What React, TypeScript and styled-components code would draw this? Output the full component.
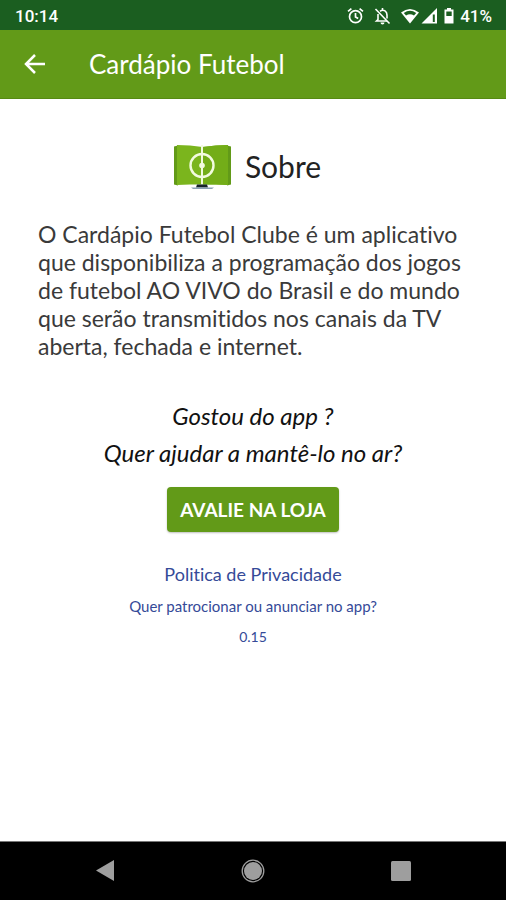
import React from "react";
import styled, { createGlobalStyle } from "styled-components";

const GlobalStyle = createGlobalStyle`
  *, *::before, *::after { box-sizing: border-box; }
  body {
    margin: 0;
    background: #fff;
    font-family: Lato, "Open Sans", sans-serif;
    font-variant-ligatures: none;
    color: #222;
  }
  button { font: inherit; border: 0; padding: 0; cursor: pointer; }
  h1, h2, p { margin: 0; font-weight: 400; }
  svg { display: block; }
`;

const Screen = styled.div`
  display: flex;
  flex-direction: column;
  min-height: 100vh;
`;

const StatusBar = styled.div`
  display: flex;
  align-items: center;
  justify-content: space-between;
  height: 30px;
  padding: 2px 14px 0 15px;
  background: #1b5e20;
  color: #fff;
  font-family: Roboto, sans-serif;
  font-size: 17px;
  font-weight: 500;
`;

const StatusIcons = styled.div`
  display: flex;
  align-items: center;
  gap: 2px;
`;

const AlertIcons = styled.div`
  display: flex;
  gap: 10px;
  margin-right: 8px;
`;

const AppBar = styled.header`
  display: flex;
  align-items: center;
  gap: 40px;
  height: 69px;
  padding: 0 21px;
  background: #629a18;
  border-bottom: 1px solid #568a13;
  color: #fff;
`;

const Title = styled.h1`
  font-size: 26px;
  line-height: 32px;
`;

const IconButton = styled.button`
  display: grid;
  place-items: center;
  min-width: 28px;
  min-height: 28px;
  background: none;
  color: inherit;
`;

const Content = styled.main`
  flex: 1;
  display: flex;
  flex-direction: column;
  align-items: center;
  padding: 43px 38px 24px;
`;

const Heading = styled.div`
  display: flex;
  align-items: center;
  gap: 12px;
  margin-right: 12px;
`;

const SectionTitle = styled.h2`
  font-size: 30px;
  line-height: 48px;
`;

const Description = styled.p`
  align-self: stretch;
  margin: 30px 0 37px;
  color: #3a3a3a;
  font-size: 23px;
  line-height: 28px;
`;

const Question = styled.p`
  color: #111;
  font-size: 24px;
  line-height: 37px;
  font-style: italic;
`;

const RateButton = styled.button`
  min-height: 45px;
  margin: 16px 0 30px;
  && { padding: 0 13px; font-size: 19px; font-weight: 700; }
  border-radius: 4px;
  background: #629a18;
  color: #fff;
  box-shadow: 0 1px 2px rgba(0, 0, 0, 0.25);
`;

const Links = styled.div`
  display: flex;
  flex-direction: column;
  align-items: center;
  gap: 8px;
  color: #354a98;
`;

const FooterLink = styled.a<{ $large?: boolean }>`
  color: inherit;
  text-decoration: none;
  font-size: ${({ $large }) => ($large ? 18 : 15)}px;
  line-height: 24px;
`;

const Version = styled.p`
  font-size: 14px;
  line-height: 22px;
`;

const NavBar = styled.nav`
  display: flex;
  align-items: center;
  justify-content: space-between;
  height: 59px;
  padding: 0 18%;
  border-top: 1px solid #777;
  background: #000;
  color: #9e9e9e;
`;

const AlarmIcon = () => (
  <svg width="17" height="18" viewBox="0 0 17 18" fill="none" stroke="#fff" strokeWidth="1.7">
    <circle cx="8.5" cy="9.7" r="6" />
    <path d="M1 4.4 4.4 1.6M12.6 1.6 16 4.4M8.5 6v4l2.7 1.6" />
  </svg>
);

const MutedBellIcon = () => (
  <svg width="17" height="18" viewBox="0 0 17 18" fill="none" stroke="#fff" strokeWidth="1.6">
    <path d="M4 7v5.5L2.5 14H13M6 4.2C10 1.8 13 4.5 13 8v3.5M8.5 1v2" />
    <path d="M1.5 2 15.5 16.5" />
    <path d="M6.5 15.5h4a2 2 0 0 1-4 0Z" fill="#fff" stroke="none" />
  </svg>
);

const WifiIcon = () => (
  <svg width="18" height="16" viewBox="0 0 18 16">
    <path d="M0 4.5Q9-2.5 18 4.5L9 15.5Z" fill="#fff" />
    <path d="M2.8 5Q9 .7 15.2 5L13 7.5Q9 5 5 7.5Z" fill="#1b5e20" />
  </svg>
);

const SignalIcon = () => (
  <svg width="17" height="16" viewBox="0 0 17 16">
    <path d="M16 0v15.5H.5Z" fill="#fff" />
    <path d="M11.8 6.5h2v7.5h-2Z" fill="#1b5e20" />
  </svg>
);

const BatteryIcon = () => (
  <svg width="18" height="16" viewBox="0 0 18 16">
    <path d="M7 0h4v1.5h2.5v14h-9v-14H7Z" fill="#fff" />
    <path d="M6.3 3.5h5.4V8H6.3Z" fill="#1b5e20" />
  </svg>
);

const BackIcon = () => (
  <svg width="22" height="22" viewBox="0 0 22 22" fill="none" stroke="currentColor" strokeWidth="2.5">
    <path d="M21 11H3M11 2 2 11l9 9" />
  </svg>
);

const PitchLogo = () => (
  <svg width="60" height="48" viewBox="0 0 60 48">
    <path d="M1 4.5 5 3.5V43.5l-4-1ZM58 4.5l-4-1V43.5l4-1Z" fill="#629a18" />
    <path d="M4 3 17 3.5 29.5 5 43 3.5 55 3V43L43 42.5H17L4 43Z" fill="#7bb51d" />
    <path d="M29.5 5 43 3.5 55 3V43L43 42.5H29.5Z" fill="#73ad18" />
    <path d="M29 3v39.5" stroke="#f2fbdf" strokeWidth="2" />
    <circle cx="29" cy="23.5" r="11.5" fill="none" stroke="#f2fbdf" strokeWidth="2.4" />
    <circle cx="29" cy="23.5" r="2.8" fill="#f2fbdf" />
    <path d="M24 42.5h10l1 3H23Z" fill="#17242c" />
    <path d="M18 45.5h23l-2 1.5H20Z" fill="#8aa1b5" />
  </svg>
);

export default function App() {
  return (
    <>
      <GlobalStyle />
      <Screen>
        <StatusBar>
          <span>10:14</span>
          <StatusIcons>
            <AlertIcons>
              <AlarmIcon />
              <MutedBellIcon />
            </AlertIcons>
            <WifiIcon />
            <SignalIcon />
            <BatteryIcon />
            <span>41%</span>
          </StatusIcons>
        </StatusBar>
        <AppBar>
          <IconButton aria-label="Voltar">
            <BackIcon />
          </IconButton>
          <Title>Cardápio Futebol</Title>
        </AppBar>
        <Content>
          <Heading>
            <PitchLogo />
            <SectionTitle>Sobre</SectionTitle>
          </Heading>
          <Description>
            O Cardápio Futebol Clube é um aplicativo que disponibiliza a programação dos jogos de
            futebol AO VIVO do Brasil e do mundo que serão transmitidos nos canais da TV aberta,
            fechada e internet.
          </Description>
          <Question>Gostou do app ?</Question>
          <Question>Quer ajudar a mantê-lo no ar?</Question>
          <RateButton>AVALIE NA LOJA</RateButton>
          <Links>
            <FooterLink href="#privacidade" $large>
              Politica de Privacidade
            </FooterLink>
            <FooterLink href="#anuncie">Quer patrocionar ou anunciar no app?</FooterLink>
            <Version>0.15</Version>
          </Links>
        </Content>
        <NavBar>
          <IconButton aria-label="Navegar para trás">
            <svg width="20" height="22" viewBox="0 0 20 22">
              <path d="M19 0v21L1 10.5Z" fill="currentColor" />
            </svg>
          </IconButton>
          <IconButton aria-label="Início">
            <svg width="24" height="24" viewBox="0 0 24 24">
              <circle cx="12" cy="12" r="9" fill="currentColor" />
              <circle cx="12" cy="12" r="10.8" fill="none" stroke="currentColor" strokeWidth="1.3" />
            </svg>
          </IconButton>
          <IconButton aria-label="Aplicativos recentes">
            <svg width="20" height="20" viewBox="0 0 20 20">
              <rect x="0" y="0" width="20" height="20" rx="1.5" fill="currentColor" />
            </svg>
          </IconButton>
        </NavBar>
      </Screen>
    </>
  );
}
